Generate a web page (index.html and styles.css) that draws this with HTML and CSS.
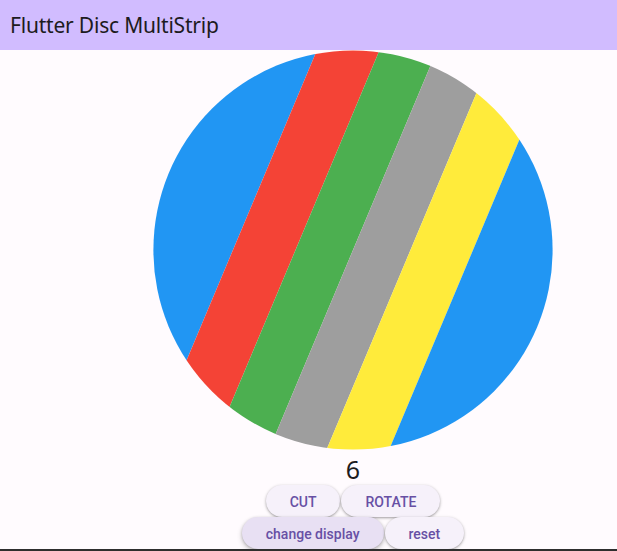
FILE: index.html
```html
<!DOCTYPE html>
<html lang="en">
<head>
<meta charset="utf-8">
<title>Flutter Disc MultiStrip</title>
<link rel="stylesheet" href="styles.css">
</head>
<body>
<header class="app-bar">
  <h1 class="app-title">Flutter Disc MultiStrip</h1>
</header>
<main class="content">
  <svg class="disc" width="400" height="400" viewBox="0 0 400 400" xmlns="http://www.w3.org/2000/svg">
    <defs>
      <clipPath id="discClip">
        <circle cx="200" cy="200" r="199.6"/>
      </clipPath>
    </defs>
    <g clip-path="url(#discClip)">
      <g transform="rotate(22.8 200 200)">
        <rect x="-300" y="-300" width="389.34" height="1000" fill="#2196F3"/>
        <rect x="89.34" y="-300" width="57.68" height="1000" fill="#F44336"/>
        <rect x="147.02" y="-300" width="52.98" height="1000" fill="#4CAF50"/>
        <rect x="200" y="-300" width="52.98" height="1000" fill="#9E9E9E"/>
        <rect x="252.98" y="-300" width="57.68" height="1000" fill="#FFEB3B"/>
        <rect x="310.66" y="-300" width="400" height="1000" fill="#2196F3"/>
      </g>
    </g>
  </svg>
  <div class="count">6</div>
  <div class="button-row">
    <button class="btn">CUT</button>
    <button class="btn">ROTATE</button>
  </div>
  <div class="button-row">
    <button class="btn btn-hover">change display</button>
    <button class="btn">reset</button>
  </div>
</main>
</body>
</html>
```
FILE: styles.css
```css
html, body {
  margin: 0;
  padding: 0;
}
body {
  height: 551px;
  box-sizing: border-box;
  border-bottom: 2px solid #2e2e2e;
  overflow: hidden;
  background: #FFFBFE;
  font-family: "Noto Sans", "Open Sans", sans-serif;
  color: #1D1B20;
}
.app-bar {
  height: 50px;
  background: #D1BCFF;
  display: flex;
  align-items: center;
  padding-left: 10px;
}
.app-title {
  margin: 0;
  font-size: 21px;
  font-weight: 400;
  letter-spacing: -0.2px;
  color: #1D1B20;
}
.content {
  width: 617px;
  box-sizing: border-box;
  padding-left: 89px;
  display: flex;
  flex-direction: column;
  align-items: center;
}
.disc {
  display: block;
}
.count {
  height: 35px;
  line-height: 38px;
  font-size: 25px;
  color: #1D1B20;
}
.button-row {
  display: flex;
  gap: 1px;
}
.btn {
  height: 32px;
  padding: 2px 24px 0;
  border: none;
  border-radius: 16px;
  background: #F6F1FA;
  color: #6750A4;
  font-family: Roboto, "Noto Sans", sans-serif;
  font-size: 14px;
  font-weight: 500;
  box-shadow: 0 1px 2px rgba(0,0,0,0.25), 0 1px 3px 1px rgba(0,0,0,0.10);
  cursor: pointer;
}
.btn-hover {
  background: #E8E0F3;
  box-shadow: 0 1px 3px rgba(0,0,0,0.25), 0 3px 5px 1px rgba(0,0,0,0.12);
}
```
